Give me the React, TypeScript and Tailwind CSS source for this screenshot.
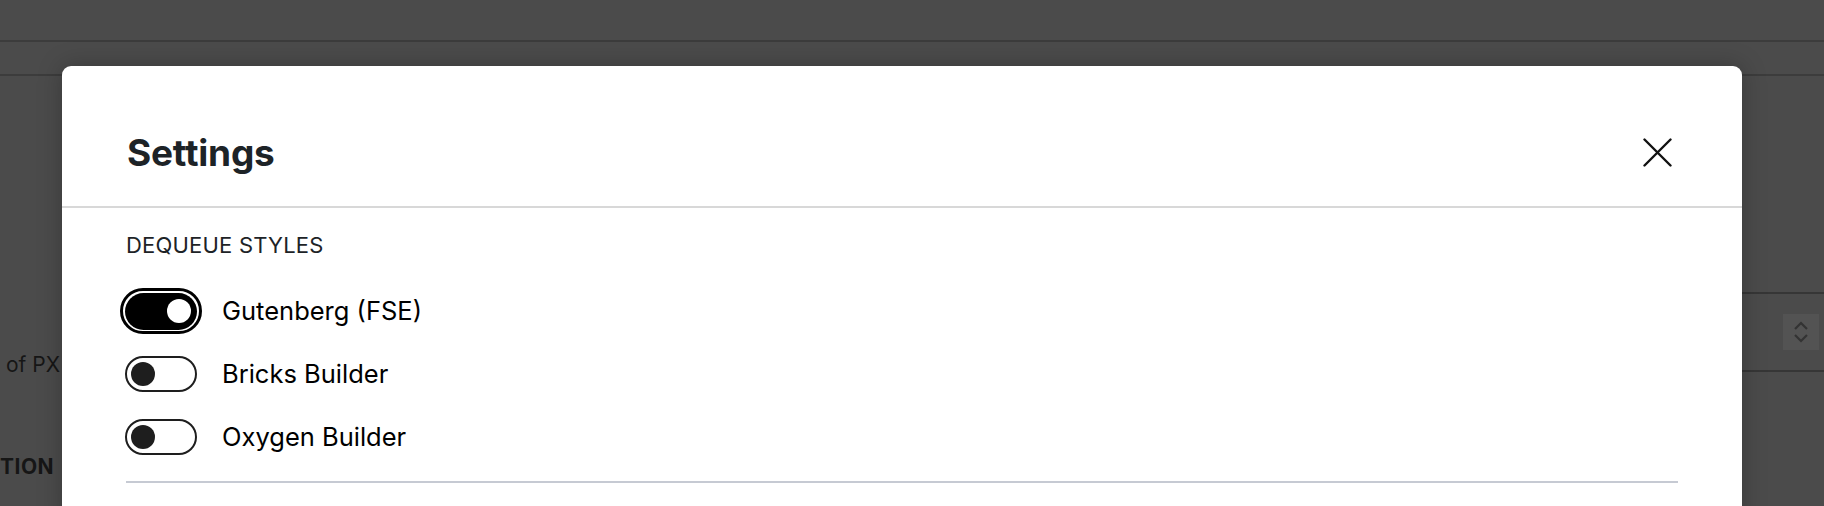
import React from "react";

function Toggle({ on }: { on: boolean }) {
  if (on) {
    return (
      <div className="flex h-[46px] w-[82px] shrink-0 items-center justify-center rounded-full border-[3px] border-black bg-white">
        <div className="flex h-[37px] w-[72px] items-center justify-end rounded-full bg-black pr-[6px]">
          <div className="h-[24px] w-[24px] rounded-full bg-white" />
        </div>
      </div>
    );
  }
  return (
    <div className="flex h-[46px] w-[82px] shrink-0 items-center justify-center">
      <div className="flex h-[36px] w-[72px] items-center rounded-full border-2 border-[#1e1e1e] bg-white pl-[4px]">
        <div className="h-[24px] w-[24px] rounded-full bg-[#1e1e1e]" />
      </div>
    </div>
  );
}

export default function App() {
  const items = [
    { label: "Gutenberg (FSE)", on: true },
    { label: "Bricks Builder", on: false },
    { label: "Oxygen Builder", on: false },
  ];
  return (
    <div
      className="relative h-[506px] w-[1824px] overflow-hidden bg-[#4b4b4b]"
      style={{ fontFamily: "Inter, 'Noto Sans', sans-serif" }}
    >
      {/* background page (dimmed) */}
      <div className="flex flex-col">
        <div className="h-[40px]" />
        <div className="h-[2px] bg-[#3c3c3c]" />
        <div className="h-[32px]" />
        <div className="h-[2px] bg-[#3c3c3c]" />
        <div className="flex">
          <div className="flex w-[62px] flex-col">
            <div className="h-[274px]" />
            <div className="pl-[6px] text-[21px] leading-[30px] text-[#161616]">of PX</div>
            <div className="h-[72px]" />
            <div className="text-[21px] font-bold leading-[30px] tracking-[0.5px] text-[#161616]">TION</div>
          </div>
          <div className="flex-1" />
          <div className="flex w-[82px] flex-col">
            <div className="h-[216px]" />
            <div className="h-[2px] bg-[#363636]" />
            <div className="flex h-[76px] items-center justify-end pr-[5px]">
              <div className="flex h-[36px] w-[36px] flex-col items-center justify-center gap-[2px] bg-[#535353]">
                <svg width="16" height="10" viewBox="0 0 16 10" fill="none">
                  <path d="M2 8 L8 2 L14 8" stroke="#333" strokeWidth="2.2" />
                </svg>
                <svg width="16" height="10" viewBox="0 0 16 10" fill="none">
                  <path d="M2 2 L8 8 L14 2" stroke="#333" strokeWidth="2.2" />
                </svg>
              </div>
            </div>
            <div className="h-[2px] bg-[#363636]" />
          </div>
        </div>
      </div>

      {/* modal */}
      <div className="absolute left-[62px] top-[66px] w-[1680px] rounded-[9px] bg-white shadow-[0_0_24px_rgba(0,0,0,0.25)]">
        <div className="flex h-[142px] items-center justify-between border-b-2 border-[#d8d8d8] pl-[65px] pr-[70px] pt-[33px]">
          <h1 className="text-[37px] font-bold leading-none tracking-[-0.2px] text-[#1d2327]">Settings</h1>
          <svg width="29" height="29" viewBox="0 0 29 29" fill="none">
            <path d="M1.5 1.5 L27.5 27.5 M27.5 1.5 L1.5 27.5" stroke="#111" strokeWidth="2.4" strokeLinecap="round" />
          </svg>
        </div>
        <div className="px-[64px] pt-[22px]">
          <div className="text-[22px] leading-[30px] tracking-[0.2px] text-[#1d2327]">DEQUEUE STYLES</div>
          <div className="mt-[28px] flex flex-col gap-[17px]">
            {items.map((it) => (
              <div key={it.label} className="-ml-[6px] flex h-[46px] items-center gap-[20px]">
                <Toggle on={it.on} />
                <span className="text-[25.5px] leading-none text-black">{it.label}</span>
              </div>
            ))}
          </div>
          <div className="mt-[21px] h-[2px] bg-[#c6cad3]" />
          <div className="h-[40px]" />
        </div>
      </div>
    </div>
  );
}
